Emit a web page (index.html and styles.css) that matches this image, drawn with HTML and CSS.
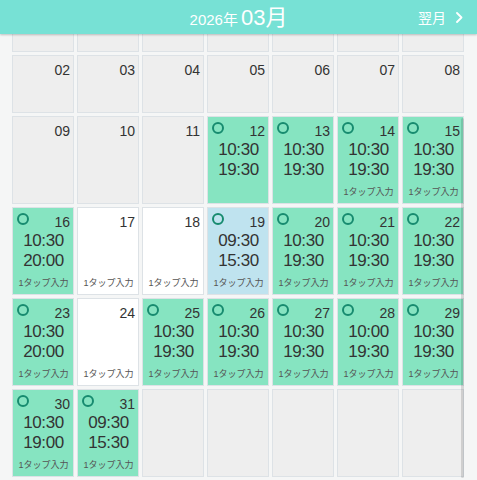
FILE: index.html
```html
<!DOCTYPE html>
<html lang="ja">
<head>
<meta charset="utf-8">
<title>2026年03月</title>
<link rel="stylesheet" href="styles.css">
</head>
<body>
<header class="topbar">
  <div class="spacer"></div>
  <h1 class="title"><span class="year">2026年</span><span class="month">03月</span></h1>
  <a class="next" href="#">翌月<svg class="chev" width="7" height="11" viewBox="0 0 7 11"><polyline points="1,1 5.5,5.5 1,10" fill="none" stroke="#fff" stroke-width="1.8" stroke-linecap="round" stroke-linejoin="round"/></svg></a>
</header>
<main class="scroller">
  <div class="calendar">
    <div class="week short">
      <div class="day off"></div>
      <div class="day off"></div>
      <div class="day off"></div>
      <div class="day off"></div>
      <div class="day off"></div>
      <div class="day off"></div>
      <div class="day off"></div>
    </div>
    <div class="week short">
      <div class="day off"><div class="top"><span></span><span class="num">02</span></div></div>
      <div class="day off"><div class="top"><span></span><span class="num">03</span></div></div>
      <div class="day off"><div class="top"><span></span><span class="num">04</span></div></div>
      <div class="day off"><div class="top"><span></span><span class="num">05</span></div></div>
      <div class="day off"><div class="top"><span></span><span class="num">06</span></div></div>
      <div class="day off"><div class="top"><span></span><span class="num">07</span></div></div>
      <div class="day off"><div class="top"><span></span><span class="num">08</span></div></div>
    </div>
    <div class="week tall">
      <div class="day off"><div class="top"><span></span><span class="num">09</span></div></div>
      <div class="day off"><div class="top"><span></span><span class="num">10</span></div></div>
      <div class="day off"><div class="top"><span></span><span class="num">11</span></div></div>
      <div class="day green"><div class="top"><i class="ring"></i><span class="num">12</span></div><div class="times"><span>10:30</span><span>19:30</span></div></div>
      <div class="day green"><div class="top"><i class="ring"></i><span class="num">13</span></div><div class="times"><span>10:30</span><span>19:30</span></div></div>
      <div class="day green"><div class="top"><i class="ring"></i><span class="num">14</span></div><div class="times"><span>10:30</span><span>19:30</span></div><div class="tap">1タップ入力</div></div>
      <div class="day green"><div class="top"><i class="ring"></i><span class="num">15</span></div><div class="times"><span>10:30</span><span>19:30</span></div><div class="tap">1タップ入力</div></div>
    </div>
    <div class="week tall">
      <div class="day green"><div class="top"><i class="ring"></i><span class="num">16</span></div><div class="times"><span>10:30</span><span>20:00</span></div><div class="tap">1タップ入力</div></div>
      <div class="day white"><div class="top"><span></span><span class="num">17</span></div><div class="tap">1タップ入力</div></div>
      <div class="day white"><div class="top"><span></span><span class="num">18</span></div><div class="tap">1タップ入力</div></div>
      <div class="day blue"><div class="top"><i class="ring"></i><span class="num">19</span></div><div class="times"><span>09:30</span><span>15:30</span></div><div class="tap">1タップ入力</div></div>
      <div class="day green"><div class="top"><i class="ring"></i><span class="num">20</span></div><div class="times"><span>10:30</span><span>19:30</span></div><div class="tap">1タップ入力</div></div>
      <div class="day green"><div class="top"><i class="ring"></i><span class="num">21</span></div><div class="times"><span>10:30</span><span>19:30</span></div><div class="tap">1タップ入力</div></div>
      <div class="day green"><div class="top"><i class="ring"></i><span class="num">22</span></div><div class="times"><span>10:30</span><span>19:30</span></div><div class="tap">1タップ入力</div></div>
    </div>
    <div class="week tall">
      <div class="day green"><div class="top"><i class="ring"></i><span class="num">23</span></div><div class="times"><span>10:30</span><span>20:00</span></div><div class="tap">1タップ入力</div></div>
      <div class="day white"><div class="top"><span></span><span class="num">24</span></div><div class="tap">1タップ入力</div></div>
      <div class="day green"><div class="top"><i class="ring"></i><span class="num">25</span></div><div class="times"><span>10:30</span><span>19:30</span></div><div class="tap">1タップ入力</div></div>
      <div class="day green"><div class="top"><i class="ring"></i><span class="num">26</span></div><div class="times"><span>10:30</span><span>19:30</span></div><div class="tap">1タップ入力</div></div>
      <div class="day green"><div class="top"><i class="ring"></i><span class="num">27</span></div><div class="times"><span>10:30</span><span>19:30</span></div><div class="tap">1タップ入力</div></div>
      <div class="day green"><div class="top"><i class="ring"></i><span class="num">28</span></div><div class="times"><span>10:00</span><span>19:30</span></div><div class="tap">1タップ入力</div></div>
      <div class="day green"><div class="top"><i class="ring"></i><span class="num">29</span></div><div class="times"><span>10:30</span><span>19:30</span></div><div class="tap">1タップ入力</div></div>
    </div>
    <div class="week tall">
      <div class="day green"><div class="top"><i class="ring"></i><span class="num">30</span></div><div class="times"><span>10:30</span><span>19:00</span></div><div class="tap">1タップ入力</div></div>
      <div class="day green"><div class="top"><i class="ring"></i><span class="num">31</span></div><div class="times"><span>09:30</span><span>15:30</span></div><div class="tap">1タップ入力</div></div>
      <div class="day off"></div>
      <div class="day off"></div>
      <div class="day off"></div>
      <div class="day off"></div>
      <div class="day off"></div>
    </div>
  </div>
  <div class="scrollbar"></div>
</main>
</body>
</html>
```
FILE: styles.css
```css
* { box-sizing: border-box; }
html, body {
  margin: 0;
  padding: 0;
  height: 100%;
}
body {
  background: #f5f6f6;
  font-family: "Liberation Sans", "Noto Sans CJK JP", sans-serif;
  color: #333;
  overflow: hidden;
}
.topbar {
  position: relative;
  z-index: 2;
  height: 34px;
  background: #77e1d5;
  box-shadow: 0 1px 2px rgba(0, 0, 0, 0.22);
  display: grid;
  grid-template-columns: 1fr auto 1fr;
  align-items: center;
  color: #fff;
}
.title {
  margin: 0;
  font-weight: normal;
  display: flex;
  align-items: baseline;
  gap: 3px;
  padding-top: 1px;
  line-height: 1;
}
.year { font-size: 15px; }
.month { font-size: 22px; }
.next {
  justify-self: end;
  display: flex;
  align-items: center;
  gap: 10px;
  color: #fff;
  text-decoration: none;
  font-size: 14px;
  padding-right: 14px;
}
.chev { display: block; }
.scroller {
  position: relative;
  height: 446px;
  overflow: hidden;
}
.calendar {
  margin-top: -40px;
  padding: 0 13px 0 12px;
  display: flex;
  flex-direction: column;
  gap: 3px;
}
.week {
  display: grid;
  grid-template-columns: repeat(7, 62px);
  gap: 3px;
}
.week.short { height: 58px; }
.week.tall { height: 88px; }
.day {
  border: 1px solid #dde2e6;
  background: #eeeeee;
  display: flex;
  flex-direction: column;
  padding: 5px 3px 5px 4px;
}
.day.green { background: #86e4c1; }
.day.blue { background: #bfe3ef; }
.day.white { background: #ffffff; }
.top {
  display: flex;
  justify-content: space-between;
  align-items: flex-start;
  height: 16px;
}
.num {
  font-size: 14px;
  line-height: 16px;
  margin-top: 1px;
}
.ring {
  display: block;
  width: 12px;
  height: 12px;
  border: 2px solid #178b6f;
  border-radius: 50%;
}
.times {
  margin-top: 2px;
  display: flex;
  flex-direction: column;
  align-items: center;
  font-size: 17px;
  line-height: 20px;
  letter-spacing: -0.4px;
}
.tap {
  margin-top: auto;
  text-align: center;
  font-size: 9px;
  line-height: 11px;
  color: #555;
}
.scrollbar {
  position: absolute;
  left: 461px;
  top: 84px;
  width: 3px;
  height: 360px;
  border-radius: 2px;
  background: rgba(0, 0, 0, 0.13);
}
```
